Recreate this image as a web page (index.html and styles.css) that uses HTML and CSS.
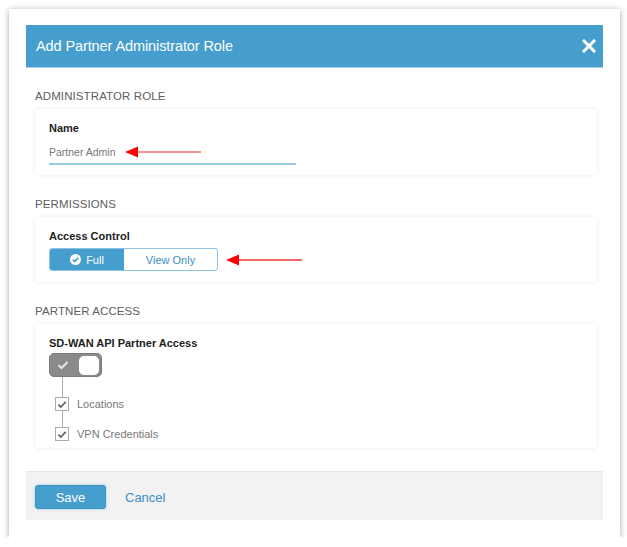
FILE: index.html
```html
<!DOCTYPE html>
<html>
<head>
<meta charset="utf-8">
<link rel="stylesheet" href="styles.css">
</head>
<body>
<div class="panel">
  <div class="header">
    <span class="title">Add Partner Administrator Role</span>
    <svg class="close" width="14" height="14" viewBox="0 0 14 14"><path d="M2 2 L12 12 M12 2 L2 12" stroke="#fff" stroke-width="3" stroke-linecap="square"/></svg>
  </div>
  <div class="content">
    <div class="section-title">ADMINISTRATOR ROLE</div>
    <div class="card card-name">
      <div class="label">Name</div>
      <div class="input">
        <span class="value">Partner Admin</span>
        <svg class="arrow arrow1" width="76" height="12" viewBox="0 0 76 12"><path d="M8 6 H76" stroke="#f26b6b" stroke-width="1.6"/><path d="M0 6 L13 0.5 L13 11.5 Z" fill="#f00"/></svg>
      </div>
    </div>
    <div class="section-title">PERMISSIONS</div>
    <div class="card card-perm">
      <div class="label">Access Control</div>
      <div class="seg-row">
        <div class="seg">
          <div class="seg-full">
            <svg width="11" height="11" viewBox="0 0 12 12"><circle cx="6" cy="6" r="6" fill="#fff"/><path d="M3.2 6.2 L5.2 8.1 L8.9 4.2" stroke="#459ecd" stroke-width="1.8" fill="none"/></svg>
            <span>Full</span>
          </div>
          <div class="seg-view">View Only</div>
        </div>
        <svg class="arrow arrow2" width="76" height="12" viewBox="0 0 76 12"><path d="M8 6 H76" stroke="#e33" stroke-width="1.4"/><path d="M0 6 L13 0.5 L13 11.5 Z" fill="#f00"/></svg>
      </div>
    </div>
    <div class="section-title">PARTNER ACCESS</div>
    <div class="card card-access">
      <div class="label">SD-WAN API Partner Access</div>
      <div class="toggle">
        <svg class="tcheck" width="12" height="10" viewBox="0 0 12 10"><path d="M1.5 5.2 L4.5 8 L10.5 2" stroke="#e6e6e6" stroke-width="2" fill="none"/></svg>
        <div class="knob"></div>
      </div>
      <div class="tree">
        <div class="vline"></div>
        <div class="item">
          <div class="cb"><svg width="10" height="9" viewBox="0 0 10 9"><path d="M1.3 4.6 L3.8 7 L8.8 1.8" stroke="#666" stroke-width="1.8" fill="none"/></svg></div>
          <span>Locations</span>
        </div>
        <div class="vline short"></div>
        <div class="item">
          <div class="cb"><svg width="10" height="9" viewBox="0 0 10 9"><path d="M1.3 4.6 L3.8 7 L8.8 1.8" stroke="#666" stroke-width="1.8" fill="none"/></svg></div>
          <span>VPN Credentials</span>
        </div>
      </div>
    </div>
  </div>
  <div class="footer">
    <button class="save">Save</button>
    <span class="cancel">Cancel</span>
  </div>
</div>
</body>
</html>
```
FILE: styles.css
```css
* { box-sizing: border-box; }
body {
  margin: 0;
  background: #fff;
  font-family: "Liberation Sans", Arial, sans-serif;
}
.panel {
  margin: 9px 0 0 9px;
  width: 611px;
  height: 528px;
  background: #fff;
  box-shadow: 0 1px 6px rgba(0,0,0,0.35);
  padding: 16px 17px 0 17px;
}
.header {
  height: 43px;
  background: #459ecd;
  border-bottom: 1px solid #a9d2ea;
  display: flex;
  align-items: center;
  justify-content: space-between;
  padding: 0 7px 0 10px;
}
.title {
  color: #fff;
  font-size: 14.5px;
  letter-spacing: -0.1px;
}
.close { display: block; }
.content {
  padding: 21px 6px 23px 9px;
}
.section-title {
  font-size: 11.5px;
  color: #5e5e5e;
  height: 14px;
  line-height: 14px;
  margin-bottom: 6px;
  letter-spacing: 0.1px;
}
.card {
  background: #fff;
  border-radius: 4px;
  box-shadow: 0 0 5px rgba(0,0,0,0.09);
  padding: 12px 14px 0 14px;
  margin-bottom: 22px;
}
.card:last-child { margin-bottom: 0; }
.label {
  font-size: 11px;
  font-weight: bold;
  color: #222;
  height: 14px;
  line-height: 14px;
}
.card-name { height: 66px; }
.input {
  position: relative;
  width: 247px;
  margin-top: 11px;
  height: 19px;
  border-bottom: 2px solid #9ccbe4;
}
.value {
  font-size: 10.5px;
  color: #777;
  line-height: 12px;
  display: block;
}
.arrow { position: absolute; display: block; }
.arrow1 { left: 76px; top: 0px; }
.card-perm { height: 65px; }
.seg-row {
  position: relative;
  margin-top: 5px;
}
.seg {
  display: flex;
  width: 169px;
  height: 23px;
  border: 1px solid #8fc3e0;
  border-radius: 3px;
  overflow: hidden;
  font-size: 11px;
}
.seg-full {
  width: 74px;
  background: #459ecd;
  color: #fff;
  display: flex;
  align-items: center;
  justify-content: center;
  gap: 5px;
}
.seg-full svg { display: block; }
.seg-view {
  flex: 1;
  color: #3a8fc4;
  display: flex;
  align-items: center;
  justify-content: center;
}
.arrow2 { left: 177px; top: 6px; }
.card-access { height: 124px; }
.toggle {
  margin-top: 3px;
  width: 53px;
  height: 24px;
  background: #8a8a8a;
  border: 1px solid #7a7a7a;
  border-radius: 5px;
  display: flex;
  align-items: center;
  justify-content: space-between;
  padding: 0 2px 0 7px;
}
.tcheck { display: block; }
.knob {
  width: 20px;
  height: 19px;
  background: #fff;
  border-radius: 5px;
}
.tree {
  padding-left: 6px;
}
.vline {
  width: 1px;
  height: 20px;
  background: #aaa;
  margin-left: 7px;
}
.vline.short { height: 16px; }
.item {
  display: flex;
  align-items: center;
  gap: 8px;
  font-size: 11px;
  color: #777;
  height: 14px;
}
.cb {
  width: 14px;
  height: 14px;
  border: 1px solid #aaa;
  background: #fff;
  display: flex;
  align-items: center;
  justify-content: center;
}
.cb svg { display: block; }
.footer {
  height: 49px;
  background: #f2f2f2;
  border-top: 1px solid #e8e8e8;
  display: flex;
  align-items: center;
  padding-left: 9px;
}
.save {
  width: 71px;
  height: 24px;
  margin-top: 2px;
  background: #459ecd;
  border: 1px solid #3d93c2;
  border-radius: 3px;
  color: #fff;
  font-family: "Liberation Sans", Arial, sans-serif;
  font-size: 13px;
  padding: 0;
  box-shadow: 0 0 3px rgba(69,158,205,0.5);
}
.cancel {
  margin-left: 19px;
  margin-top: 2px;
  color: #3a8fc4;
  font-size: 13px;
}
```
